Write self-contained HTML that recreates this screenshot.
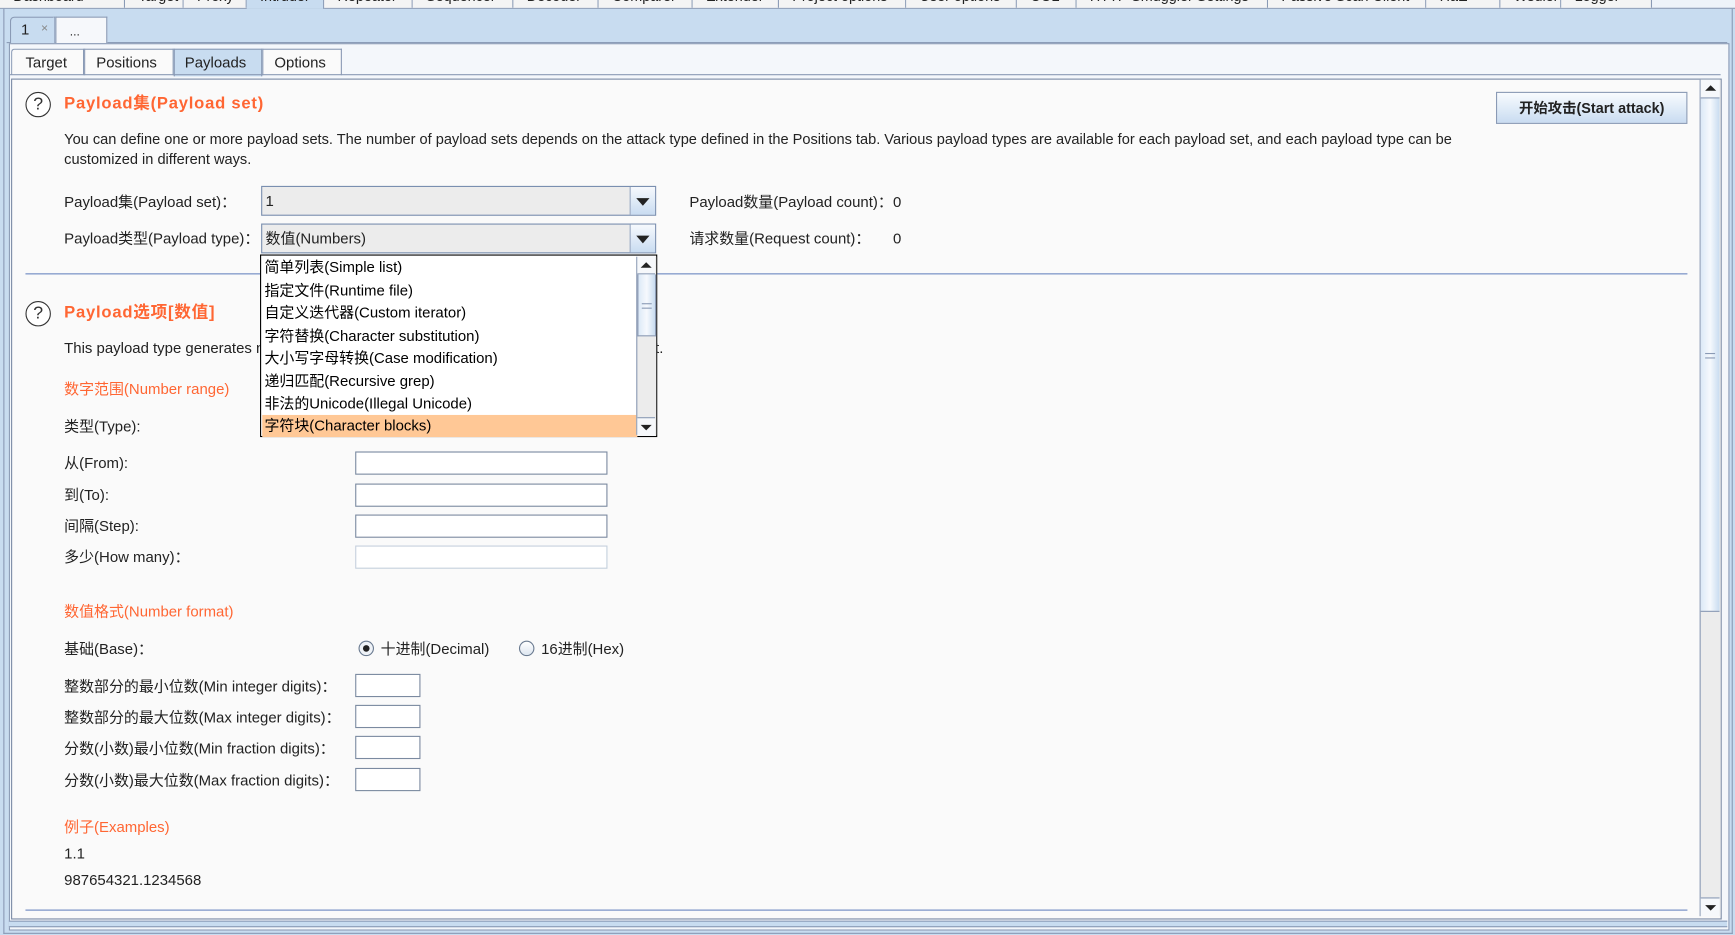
<!DOCTYPE html>
<html><head><meta charset="utf-8"><style>
html,body{margin:0;padding:0;width:1735px;height:935px;overflow:hidden;background:#c8dcf0}
#s{position:absolute;left:0;top:0;width:1568px;height:845px;transform:scale(1.10651);transform-origin:0 0;font-family:"Liberation Sans","Noto Sans CJK SC",sans-serif;font-size:13.5px;color:#222;background:#c8dcf0}
.a{position:absolute;white-space:nowrap;line-height:16px}
.tt{position:absolute;top:-9px;height:16px;background:#f4f4f4;border-right:1px solid #8a9ab5;font-size:13px;line-height:12px;color:#222;overflow:hidden;text-indent:12px}
.or{color:#ff6633}
.ttl{color:#ff6633;font-weight:bold;font-size:15px;letter-spacing:.7px}
.help{position:absolute;width:21px;height:21px;border:1.5px solid #333;border-radius:50%;text-align:center;line-height:21px;font-size:16px;color:#333;background:#fff}
.combo{position:absolute;left:236px;width:355px;height:25px;border:1px solid #7a8fb0;background:#ececec}
.combo span{position:absolute;left:3px;top:5px;line-height:16px}
.combo b{position:absolute;right:0;top:0;width:22px;height:25px;border-left:1px solid #9aaac5;background:linear-gradient(#f6f9fd,#c9dcf1)}
.combo b:after{content:"";position:absolute;left:5px;top:10px;border-left:6px solid transparent;border-right:6px solid transparent;border-top:7px solid #222}
.in{position:absolute;left:321px;width:226px;height:19px;border:1px solid #7b8aa0;background:#fff}
.sm{position:absolute;left:321px;width:57px;height:19px;border:1px solid #7b8aa0;background:#fff}
.li{position:absolute;left:1px;width:337px;height:20px;line-height:20px;padding-left:2px;color:#000}
</style></head><body><div id="s">
<div class="a" style="left:0;top:0;width:1568px;height:7px;background:#eef3f9;border-bottom:1px solid #8a9ab5"></div>
<div class="tt" style="left:0;width:112px">Dashboard</div>
<div class="tt" style="left:113px;width:52px">Target</div>
<div class="tt" style="left:166px;width:56px">Proxy</div>
<div class="tt" style="left:223px;width:69px;background:#c8dcf0;height:17px">Intruder</div>
<div class="tt" style="left:293px;width:79px">Repeater</div>
<div class="tt" style="left:373px;width:90px">Sequencer</div>
<div class="tt" style="left:464px;width:76px">Decoder</div>
<div class="tt" style="left:541px;width:84px">Comparer</div>
<div class="tt" style="left:626px;width:77px">Extender</div>
<div class="tt" style="left:704px;width:114px">Project options</div>
<div class="tt" style="left:819px;width:99px">User options</div>
<div class="tt" style="left:919px;width:53px">CO2</div>
<div class="tt" style="left:973px;width:172px">HTTP Smuggler Settings</div>
<div class="tt" style="left:1146px;width:142px">Passive Scan Client</div>
<div class="tt" style="left:1289px;width:66px">HaE</div>
<div class="tt" style="left:1356px;width:54px">Wsdler</div>
<div class="tt" style="left:1411px;width:81px">Logger</div>
<div class="a" style="left:3px;top:8px;width:1561px;height:835px;border:1px solid #8a9ab5;border-top:none"></div>
<div class="a" style="left:6px;top:38px;width:1555px;height:1px;background:#8a9ab5"></div>
<div class="a" style="left:9px;top:15px;width:39px;height:23px;background:#c8dcf0;border:1px solid #8a9ab5;border-bottom:none;border-radius:4px 0 0 0"><span class="a" style="left:9px;top:3px">1</span><span class="a" style="left:27px;top:2px;font-size:11px;color:#888">×</span></div>
<div class="a" style="left:50px;top:15px;width:45px;height:23px;background:#f6f8fb;border:1px solid #8a9ab5;border-bottom:none"><span class="a" style="left:12px;top:5px;font-size:11px">...</span></div>
<div class="a" style="left:8px;top:39px;width:1553px;height:800px;background:#f4f7fb;border:1px solid #8a9ab5"></div>
<div class="a" style="left:10px;top:44px;width:64px;height:23px;background:#fafafa;border:1px solid #8a9ab5;border-bottom:none;border-radius:3px 0 0 0"><span class="a" style="left:12px;top:4px">Target</span></div>
<div class="a" style="left:76px;top:44px;width:79px;height:23px;background:#fafafa;border:1px solid #8a9ab5;border-bottom:none"><span class="a" style="left:10px;top:4px">Positions</span></div>
<div class="a" style="left:157px;top:44px;width:78px;height:24px;background:#c8dcf0;border:1px solid #8a9ab5;border-bottom:none"><span class="a" style="left:9px;top:4px">Payloads</span></div>
<div class="a" style="left:237px;top:44px;width:70px;height:23px;background:#fafafa;border:1px solid #8a9ab5;border-bottom:none"><span class="a" style="left:10px;top:4px">Options</span></div>
<div class="a" style="left:9px;top:67px;width:1546px;height:1px;background:#8a9ab5"></div>
<div class="a" style="left:10px;top:71px;width:1544px;height:758px;background:#fafafa;border:1px solid #7a8aa5"></div>
<div class="a" style="left:8px;top:832px;width:1553px;height:4px;border-top:1px solid #8a9ab5;border-bottom:1px solid #8a9ab5;background:#c8dcf0"></div>
<div class="a" style="left:1536px;top:72px;width:18px;height:756px;background:#ececec;border-left:1px solid #8a9ab5"></div>
<div class="a" style="left:1537px;top:72px;width:17px;height:16px;background:#f6f8fb;border-bottom:1px solid #8a9ab5"><div class="a" style="left:4px;top:5px;border-left:5px solid transparent;border-right:5px solid transparent;border-bottom:5px solid #222"></div></div>
<div class="a" style="left:1537px;top:89px;width:17px;height:463px;background:linear-gradient(90deg,#dce9f7,#f6f9fd 50%,#c8dcf0);border-bottom:1px solid #8a9ab5"><div class="a" style="left:4px;top:230px;width:9px;height:3px;border-top:1px solid #8a9ab5;border-bottom:1px solid #8a9ab5"></div></div>
<div class="a" style="left:1537px;top:811px;width:17px;height:16px;background:#f6f8fb;border-top:1px solid #8a9ab5"><div class="a" style="left:4px;top:6px;border-left:5px solid transparent;border-right:5px solid transparent;border-top:5px solid #222"></div></div>
<div class="help" style="left:23px;top:83px">?</div>
<div class="a ttl" style="left:58px;top:86px">Payload集(Payload set)</div>
<div class="a" style="left:1352px;top:83px;width:171px;height:27px;border:1px solid #8a9ab5;background:linear-gradient(#f8fbfe,#c9dcf1);text-align:center;line-height:27px;font-weight:bold;font-size:13px">开始攻击(Start attack)</div>
<div class="a" style="left:58px;top:117px;line-height:18px;font-size:13.2px">You can define one or more payload sets. The number of payload sets depends on the attack type defined in the Positions tab. Various payload types are available for each payload set, and each payload type can be<br>customized in different ways.</div>
<div class="a" style="left:58px;top:175px">Payload集(Payload set)：</div>
<div class="combo" style="top:168px"><span>1</span><b></b></div>
<div class="a" style="left:623px;top:175px">Payload数量(Payload count)：</div>
<div class="a" style="left:807px;top:175px">0</div>
<div class="a" style="left:58px;top:208px">Payload类型(Payload type)：</div>
<div class="combo" style="top:202px"><span>数值(Numbers)</span><b></b></div>
<div class="a" style="left:623px;top:208px">请求数量(Request count)：</div>
<div class="a" style="left:807px;top:208px">0</div>
<div class="a" style="left:23px;top:247px;width:1502px;height:1px;background:#6b87c0"></div>
<div class="help" style="left:23px;top:272px">?</div>
<div class="a ttl" style="left:58px;top:275px">Payload选项[数值]</div>
<div class="a" style="left:58px;top:307px">This payload type generates n</div>
<div class="a" style="left:592px;top:307px">t.</div>
<div class="a or" style="left:58px;top:344px">数字范围(Number range)</div>
<div class="a" style="left:58px;top:378px">类型(Type):</div>
<div class="a" style="left:58px;top:411px">从(From):</div>
<div class="in" style="top:408px"></div>
<div class="a" style="left:58px;top:440px">到(To):</div>
<div class="in" style="top:437px"></div>
<div class="a" style="left:58px;top:468px">间隔(Step):</div>
<div class="in" style="top:465px"></div>
<div class="a" style="left:58px;top:496px">多少(How many)：</div>
<div class="in" style="top:493px;border-color:#c5d0dd"></div>
<div class="a or" style="left:58px;top:545px">数值格式(Number format)</div>
<div class="a" style="left:58px;top:579px">基础(Base)：</div>
<div class="a" style="left:324px;top:579px;width:12px;height:12px;border:1px solid #6a7a90;border-radius:50%;background:#eef2f7"><div class="a" style="left:3px;top:3px;width:6px;height:6px;border-radius:50%;background:#222"></div></div>
<div class="a" style="left:344px;top:579px">十进制(Decimal)</div>
<div class="a" style="left:469px;top:579px;width:12px;height:12px;border:1px solid #6a7a90;border-radius:50%;background:linear-gradient(#fff,#dde6f0)"></div>
<div class="a" style="left:489px;top:579px">16进制(Hex)</div>
<div class="a" style="left:58px;top:613px">整数部分的最小位数(Min integer digits)：</div>
<div class="sm" style="top:609px"></div>
<div class="a" style="left:58px;top:641px">整数部分的最大位数(Max integer digits)：</div>
<div class="sm" style="top:637px"></div>
<div class="a" style="left:58px;top:669px">分数(小数)最小位数(Min fraction digits)：</div>
<div class="sm" style="top:665px"></div>
<div class="a" style="left:58px;top:698px">分数(小数)最大位数(Max fraction digits)：</div>
<div class="sm" style="top:694px"></div>
<div class="a or" style="left:58px;top:740px">例子(Examples)</div>
<div class="a" style="left:58px;top:764px">1.1</div>
<div class="a" style="left:58px;top:788px">987654321.1234568</div>
<div class="a" style="left:23px;top:822px;width:1502px;height:1px;background:#6b87c0"></div>
<div class="a" style="left:235px;top:230px;width:357px;height:163px;border:1px solid #000;background:#fff">
<div class="li" style="top:1px">简单列表(Simple list)</div>
<div class="li" style="top:21.5px">指定文件(Runtime file)</div>
<div class="li" style="top:42px">自定义迭代器(Custom iterator)</div>
<div class="li" style="top:62.5px">字符替换(Character substitution)</div>
<div class="li" style="top:83px">大小写字母转换(Case modification)</div>
<div class="li" style="top:103.5px">递归匹配(Recursive grep)</div>
<div class="li" style="top:124px">非法的Unicode(Illegal Unicode)</div>
<div class="li" style="top:144px;background:#ffc896">字符块(Character blocks)</div>
<div class="a" style="left:339px;top:1px;width:17px;height:161px;background:#ececec;border-left:1px solid #8a9ab5"></div>
<div class="a" style="left:340px;top:1px;width:16px;height:15px;background:#f6f8fb;border-bottom:1px solid #8a9ab5"><div class="a" style="left:3px;top:5px;border-left:5px solid transparent;border-right:5px solid transparent;border-bottom:5px solid #222"></div></div>
<div class="a" style="left:340px;top:17px;width:15px;height:55px;background:linear-gradient(90deg,#dce9f7,#f6f9fd 50%,#c8dcf0);border:1px solid #8a9ab5;border-top:none"><div class="a" style="left:3px;top:26px;width:9px;height:3px;border-top:1px solid #8a9ab5;border-bottom:1px solid #8a9ab5"></div></div>
<div class="a" style="left:340px;top:146px;width:16px;height:16px;background:#f6f8fb;border-top:1px solid #8a9ab5"><div class="a" style="left:3px;top:6px;border-left:5px solid transparent;border-right:5px solid transparent;border-top:5px solid #222"></div></div>
</div>
</div></body></html>
